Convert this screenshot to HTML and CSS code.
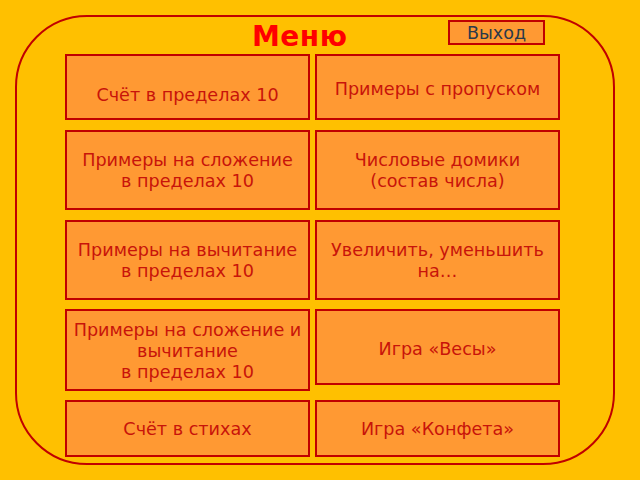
FILE: index.html
```html
<!DOCTYPE html>
<html lang="ru">
<head>
<meta charset="utf-8">
<title>Меню</title>
<link rel="stylesheet" href="styles.css">
</head>
<body>
<div class="frame">
  <div class="header">
    <div class="title">Меню</div>
    <div class="exit">Выход</div>
  </div>
  <div class="grid">
    <div class="item item-low">Счёт в пределах 10</div>
    <div class="item item-mid">Примеры с пропуском</div>
    <div class="item">Примеры на сложение <br>в пределах 10</div>
    <div class="item">Числовые домики<br>(состав числа)</div>
    <div class="item">Примеры на вычитание<br>в пределах 10</div>
    <div class="item">Увеличить, уменьшить на…</div>
    <div class="item">Примеры на сложение и вычитание <br>в пределах 10</div>
    <div class="item item-short">Игра «Весы»</div>
    <div class="item">Счёт в стихах</div>
    <div class="item">Игра «Конфета»</div>
  </div>
</div>
</body>
</html>
```
FILE: styles.css
```css
html, body {
  margin: 0;
  padding: 0;
}
body {
  background: #ffc000;
  width: 640px;
  height: 480px;
  overflow: hidden;
  font-family: "DejaVu Sans", "Liberation Sans", sans-serif;
  padding: 15px 0 0 15px;
  box-sizing: border-box;
}
.frame {
  width: 600px;
  height: 450px;
  box-sizing: border-box;
  border: 2px solid #c00000;
  border-radius: 72px;
  padding: 3px 0 0 48px;
}
.header {
  width: 495px;
  height: 34px;
  display: flex;
  align-items: flex-start;
}
.title {
  margin-left: 187px;
  margin-top: 1px;
  font-size: 28px;
  font-weight: bold;
  color: #ff0000;
  line-height: 32px;
  letter-spacing: 0.5px;
}
.exit {
  margin-left: auto;
  margin-right: 15px;
  width: 97px;
  height: 25px;
  box-sizing: border-box;
  border: 2px solid #c00000;
  background: #ff9933;
  color: #2b3a4a;
  font-size: 17.5px;
  line-height: 21px;
  padding-top: 1px;
  text-align: center;
}
.grid {
  width: 495px;
  display: grid;
  grid-template-columns: 245px 245px;
  grid-template-rows: 66px 80px 80px 81px 56px;
  column-gap: 5px;
  row-gap: 10px;
}
.grid > .item:nth-child(n+7) {
  margin-top: -1px;
}
.item {
  box-sizing: border-box;
  border: 2px solid #c00000;
  background: #ff9933;
  color: #c8140a;
  font-size: 17.6px;
  line-height: 21px;
  text-align: center;
  display: flex;
  align-items: center;
  justify-content: center;
  padding: 2px 2px 0;
}
.item-low {
  padding-top: 16px;
}
.item-mid {
  padding-top: 5px;
}
.item-short {
  align-self: start;
  height: 76px;
  padding-top: 5px;
}
```
